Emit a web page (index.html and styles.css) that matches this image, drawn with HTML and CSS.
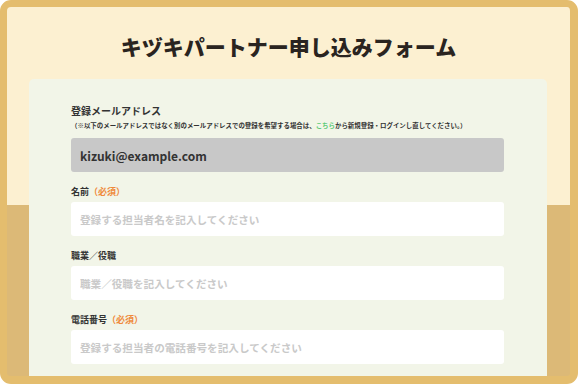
FILE: index.html
```html
<!DOCTYPE html>
<html lang="ja">
<head>
    <meta charset="UTF-8">
    <meta name="viewport" content="width=device-width, initial-scale=1.0">
    <title>キヅキパートナー申し込みフォーム</title>
    <link rel="stylesheet" href="styles.css">
</head>
<body>
    <div class="frame">
        <h1 class="title">キヅキパートナー申し込みフォーム</h1>

        <!-- Form card -->
        <form class="card">
            <div class="field field-email">
                <label class="label">登録メールアドレス</label>
                <p class="note">（※以下のメールアドレスではなく別のメールアドレスでの登録を希望する場合は、<a href="#">こちら</a>から新規登録・ログインし直してください。）</p>
                <input class="input input-readonly" type="email" value="kizuki@example.com" readonly>
            </div>
            <div class="field">
                <label class="label">名前<span class="req">（必須）</span></label>
                <input class="input" type="text" placeholder="登録する担当者名を記入してください">
            </div>
            <div class="field">
                <label class="label">職業／役職</label>
                <input class="input" type="text" placeholder="職業／役職を記入してください">
            </div>
            <div class="field">
                <label class="label">電話番号<span class="req">（必須）</span></label>
                <input class="input" type="tel" placeholder="登録する担当者の電話番号を記入してください">
            </div>
        </form>
    </div>
</body>
</html>
```

FILE: styles.css
```css
* { box-sizing: border-box; }
body { margin: 0; font-family: "Noto Sans CJK JP", "Noto Sans", sans-serif; color: #333; }

.frame {
    height: 384px;
    border: solid #e4bd6e;
    border-width: 7px 8px 8px 7px;
    border-radius: 11px;
    background: linear-gradient(#fcf0d1 198px, #dcb977 198px);
    overflow: hidden;
}

.title {
    margin: 0;
    padding: 24px 0 0;
    height: 72px;
    text-align: center;
    font-size: 21px;
    line-height: 30px;
    font-weight: 900;
    color: #2a2420;
}

/* Card */
.card {
    margin: 0 23px 0 22px;
    padding: 26px 43px 20px 42px;
    background: #f2f5e8;
    border-radius: 5px;
    display: flex;
    flex-direction: column;
    gap: 14px;
}
.field { display: flex; flex-direction: column; }
.label { font-size: 9px; line-height: 11px; font-weight: bold; color: #333; margin-bottom: 5px; }
.field-email .label { font-size: 10px; line-height: 12px; margin-bottom: 4px; }
.req { color: #ef8a3b; }
.note { margin: 0 0 8px; font-size: 6.45px; line-height: 9px; font-weight: bold; color: #333; white-space: nowrap; }
.note a { color: #5dcb78; text-decoration: none; }

.input {
    height: 34px;
    border: none;
    border-radius: 3px;
    background: #fff;
    padding: 0 9px;
    font-family: inherit;
    font-size: 10.6px;
    font-weight: bold;
    color: #333;
    outline: none;
}
.input::placeholder { color: #c9c9c9; }
.input-readonly { background: #c8c8c8; font-size: 12px; color: #333; }
```
